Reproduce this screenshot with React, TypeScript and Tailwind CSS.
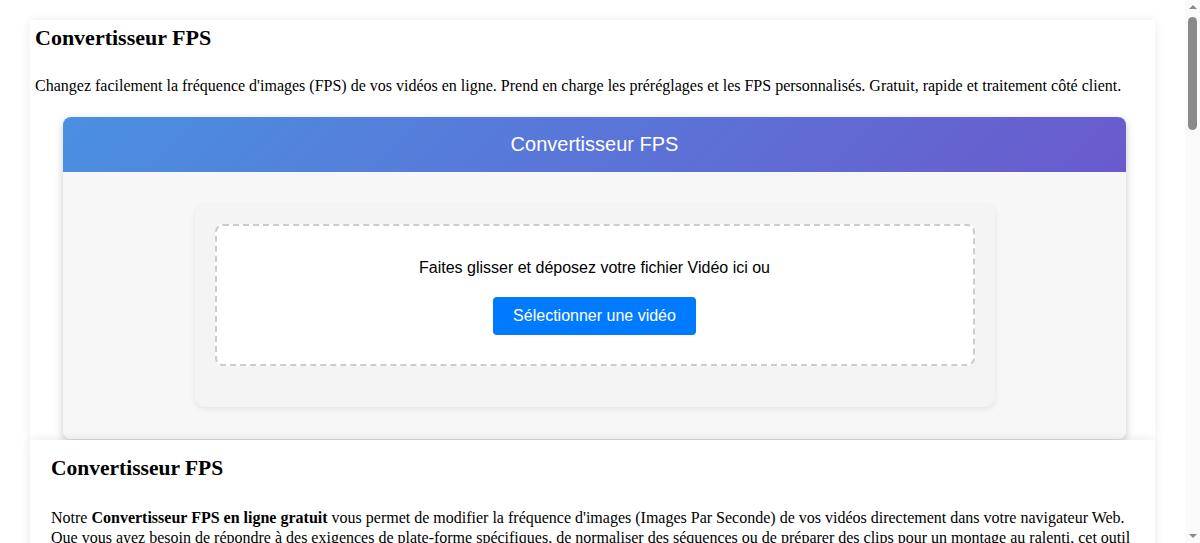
import React from 'react';

const extra = [
  {
    title: "Pourquoi changer la fréquence d'images ?",
    text: "La fréquence d'images détermine la fluidité d'une vidéo. Le cinéma utilise généralement 24 FPS, la télévision 25 ou 30 FPS, et les jeux vidéo ou les contenus sportifs profitent souvent de 60 FPS. Convertir vos fichiers vous aide à garder une cohérence entre plusieurs sources.",
  },
  {
    title: "Comment utiliser le Convertisseur FPS",
    text: "Sélectionnez ou glissez votre fichier vidéo, choisissez un préréglage (24, 25, 30, 50, 60 FPS) ou saisissez une valeur personnalisée, puis lancez la conversion. Le fichier est traité localement et vous pouvez le télécharger dès que le traitement est terminé.",
  },
  {
    title: "Confidentialité et sécurité",
    text: "Toutes les opérations sont réalisées côté client. Vos vidéos ne sont jamais envoyées sur un serveur, ce qui garantit la confidentialité de vos contenus et un traitement rapide, même pour les fichiers volumineux.",
  },
];

const Scrollbar = () => (
  <div className="flex w-[15px] shrink-0 flex-col items-center bg-[#fafafa]">
    <div className="mt-[5px] h-0 w-0 border-x-[4px] border-b-[4px] border-x-transparent border-b-[#8a8a8a]" />
    <div className="mt-[8px] h-[113px] w-[9px] rounded-full bg-[#8a8a8a]" />
    <div className="flex-1" />
    <div className="mb-[5px] h-0 w-0 border-x-[4px] border-t-[4px] border-x-transparent border-t-[#8a8a8a]" />
  </div>
);

const App = () => {
  return (
    <div className="flex h-screen overflow-hidden bg-white font-['Liberation_Serif',serif] text-black">
      <div className="flex-1 overflow-y-auto [scrollbar-width:none]">
        <div className="px-[30px] pt-5 pb-10">
          {/* Top section */}
          <section className="bg-white px-[5px] pt-[5px] pb-px shadow-[0_0_10px_rgba(0,0,0,0.08)]">
            <h2 className="text-[22px] leading-[25px] font-bold">Convertisseur FPS</h2>
            <p className="mt-6 text-[16px] leading-6">
              Changez facilement la fréquence d'images (FPS) de vos vidéos en ligne. Prend en charge les préréglages et les FPS personnalisés. Gratuit, rapide et traitement côté client.
            </p>

            {/* Tool */}
            <div className="mt-[19px] ml-[28px] w-[1063px] overflow-hidden rounded-lg shadow-[0_3px_8px_rgba(0,0,0,0.22)] font-['Liberation_Sans',Arial,sans-serif]">
              <div className="bg-[linear-gradient(135deg,#4a90e2,#6a5acd)] py-4 text-center text-[20px] leading-[23px] text-white">
                Convertisseur FPS
              </div>
              <div className="bg-[#f7f7f7] p-8">
                <div className="mx-auto max-w-[800px] rounded-[10px] bg-[#f4f4f4] px-5 pt-5 pb-[41px] shadow-[0_2px_6px_rgba(0,0,0,0.08)]">
                  <div className="flex flex-col items-center rounded-lg border-2 border-dashed border-[#cccccc] bg-white pt-[33px] pb-[29px]">
                    <p className="text-[16px] leading-[18px] text-black">
                      Faites glisser et déposez votre fichier Vidéo ici ou
                    </p>
                    <button className="mt-5 rounded-[4px] bg-[#007bff] px-5 py-2.5 text-[16px] leading-[18px] text-white">
                      Sélectionner une vidéo
                    </button>
                  </div>
                </div>
              </div>
            </div>
          </section>

          {/* Description section */}
          <section className="bg-white px-[21px] pt-[16px] pb-8 shadow-[0_0_10px_rgba(0,0,0,0.1)]">
            <h2 className="text-[21.5px] leading-[25px] font-bold">Convertisseur FPS</h2>
            <p className="mt-[27px] text-[16px] leading-[20px]">
              Notre <strong>Convertisseur FPS en ligne gratuit</strong> vous permet de modifier la fréquence d'images (Images Par Seconde) de vos vidéos directement dans votre navigateur Web. Que vous ayez besoin de répondre à des exigences de plate-forme spécifiques, de normaliser des séquences ou de préparer des clips pour un montage au ralenti, cet outil vous offre un contrôle simple et précis sur la fréquence d'images, sans installer de logiciel.
            </p>
            {extra.map((s) => (
              <div key={s.title}>
                <h3 className="mt-6 text-[19px] leading-[22px] font-bold">{s.title}</h3>
                <p className="mt-4 text-[16px] leading-[20px]">{s.text}</p>
              </div>
            ))}
          </section>
        </div>
      </div>
      <Scrollbar />
    </div>
  );
};

export default App;
